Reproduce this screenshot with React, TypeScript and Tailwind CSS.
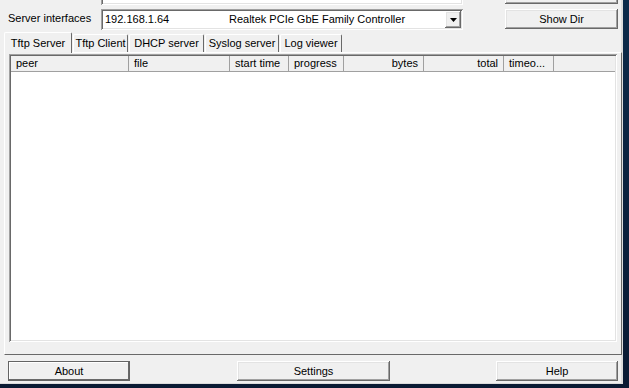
import React from "react";

const raised =
  "bg-[#f0f0f0] shadow-[inset_-1px_-1px_#696969,inset_1px_1px_#ffffff,inset_-2px_-2px_#a0a0a0,inset_2px_2px_#e3e3e3]";
const sunken =
  "bg-white shadow-[inset_1px_1px_#a0a0a0,inset_-1px_-1px_#ffffff,inset_2px_2px_#696969,inset_-2px_-2px_#e3e3e3]";

type Col = { label: string; width: number; align?: "left" | "right" };

const columns: Col[] = [
  { label: "peer", width: 118 },
  { label: "file", width: 101 },
  { label: "start time", width: 59 },
  { label: "progress", width: 55 },
  { label: "bytes", width: 80, align: "right" },
  { label: "total", width: 80, align: "right" },
  { label: "timeo...", width: 50 },
  { label: "", width: 62 },
];

const tabs = [
  { label: "Tftp Server", width: 68 },
  { label: "Tftp Client", width: 55 },
  { label: "DHCP server", width: 75 },
  { label: "Syslog server", width: 74 },
  { label: "Log viewer", width: 62 },
];

function Button({ label, width, isDefault }: { label: string; width: number; isDefault?: boolean }) {
  return (
    <div
      className={
        isDefault
          ? "flex h-[20px] items-center justify-center bg-[#f0f0f0] shadow-[inset_0_0_0_1px_#646464,inset_-2px_-2px_#696969,inset_2px_2px_#ffffff]"
          : `flex h-[20px] items-center justify-center ${raised}`
      }
      style={{ width }}
    >
      {label}
    </div>
  );
}

export default function App() {
  return (
    <div
      className="h-[388px] w-[629px] overflow-hidden bg-gradient-to-b from-[#0b2a4a] to-[#0a1a33] text-[11px] leading-[13px] text-black"
      style={{ fontFamily: '"Liberation Sans", Arial, sans-serif' }}
    >
      <div className="flex h-[384px] w-[623px] flex-col border-r-2 border-b border-r-[#dcdcdc] border-b-[#dcdcdc] bg-[#f0f0f0]">
        {/* partially scrolled-off row */}
        <div className="flex h-[5px]">
          <div className={`ml-[101px] mt-[-16px] h-[21px] w-[362px] ${sunken}`} />
          <div className={`ml-[42px] mt-[-16px] h-[20px] w-[113px] ${raised}`} />
        </div>

        {/* server interfaces */}
        <div className="mt-[4px] flex h-[21px]">
          <div className="ml-[8px] w-[93px] pt-[3px]">Server interfaces</div>
          <div className={`flex h-[21px] w-[362px] items-center ${sunken}`}>
            <span className="ml-[4px] w-[124px]">192.168.1.64</span>
            <span className="flex-1">Realtek PCIe GbE Family Controller</span>
            <div className={`mr-[2px] flex h-[17px] w-[16px] items-center justify-center ${raised}`}>
              <svg width="7" height="4" viewBox="0 0 7 4">
                <path d="M0 0h7L3.5 4z" fill="#000" />
              </svg>
            </div>
          </div>
          <div className="ml-[42px]">
            <Button label="Show Dir" width={113} />
          </div>
        </div>

        {/* tabs */}
        <div className="mt-[2px] flex h-[20px] items-end pl-[4px]">
          {tabs.map((t, i) => (
            <div
              key={t.label}
              style={{ width: t.width }}
              className={
                i === 0
                  ? "relative z-10 mb-[-1px] flex h-[21px] items-center justify-center whitespace-nowrap rounded-t-[2px] border-t border-l border-r border-t-white border-l-white border-r-[#696969] bg-[#f0f0f0]"
                  : "ml-[1px] flex h-[18px] items-center justify-center whitespace-nowrap rounded-t-[2px] border-t border-l border-r border-t-white border-l-white border-r-[#696969] bg-[#f0f0f0]"
              }
            >
              {t.label}
            </div>
          ))}
        </div>

        {/* tab panel */}
        <div className="ml-[4px] flex h-[303px] w-[618px] flex-col border-t border-l border-r border-b border-t-white border-l-white border-r-[#696969] border-b-[#696969] px-[4px] pt-[1px]">
          <div className={`flex h-[288px] w-[608px] flex-col p-[2px] ${sunken}`}>
            <div className="flex h-[16px] overflow-hidden bg-[#f0f0f0]">
              {columns.map((c, i) => (
                <div
                  key={i}
                  className={`flex h-[16px] shrink-0 items-center whitespace-nowrap border-r border-b border-r-[#a0a0a0] border-b-[#a0a0a0] px-[5px] ${
                    c.align === "right" ? "justify-end" : "justify-start"
                  }`}
                  style={{ width: c.width }}
                >
                  {c.label}
                </div>
              ))}
            </div>
            <div className="flex-1 bg-white" />
          </div>
        </div>

        {/* bottom buttons */}
        <div className="mt-[6px] flex">
          <div className="ml-[8px]">
            <Button label="About" width={122} isDefault />
          </div>
          <div className="ml-[107px]">
            <Button label="Settings" width={153} />
          </div>
          <div className="ml-[106px]">
            <Button label="Help" width={122} />
          </div>
        </div>
      </div>
    </div>
  );
}
